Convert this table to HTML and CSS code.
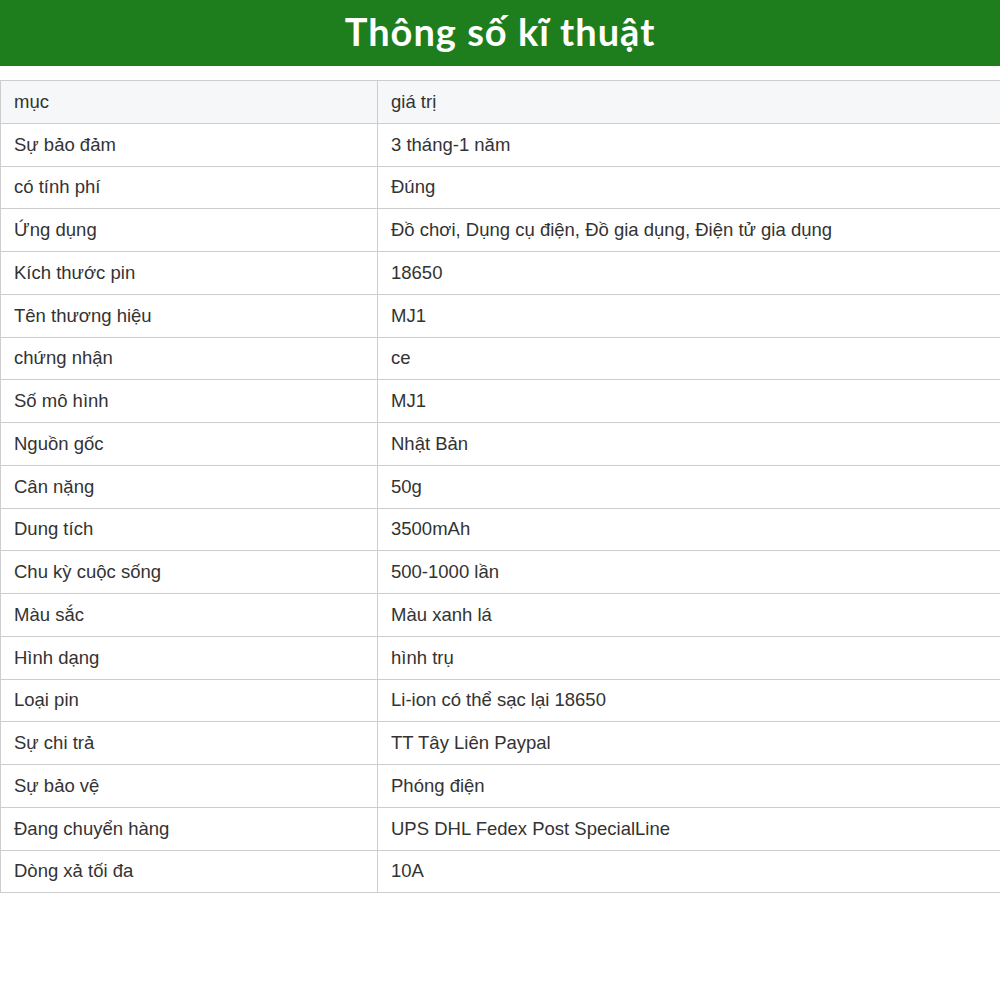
FILE: index.html
```html
<!DOCTYPE html>
<html lang="vi">
<head>
<meta charset="utf-8">
<title>Thông số kĩ thuật</title>
<link rel="stylesheet" href="styles.css">
</head>
<body>
<header class="banner"><h1 class="banner-title">Thông số kĩ thuật</h1></header>
<main class="content">
<table class="spec">
<colgroup><col class="col-key"><col class="col-val"></colgroup>
<thead>
<tr><th>mục</th><th>giá trị</th></tr>
</thead>
<tbody>
<tr><td>Sự bảo đảm</td><td>3 tháng-1 năm</td></tr>
<tr><td>có tính phí</td><td>Đúng</td></tr>
<tr><td>Ứng dụng</td><td>Đồ chơi, Dụng cụ điện, Đồ gia dụng, Điện tử gia dụng</td></tr>
<tr><td>Kích thước pin</td><td>18650</td></tr>
<tr><td>Tên thương hiệu</td><td>MJ1</td></tr>
<tr><td>chứng nhận</td><td>ce</td></tr>
<tr><td>Số mô hình</td><td>MJ1</td></tr>
<tr><td>Nguồn gốc</td><td>Nhật Bản</td></tr>
<tr><td>Cân nặng</td><td>50g</td></tr>
<tr><td>Dung tích</td><td>3500mAh</td></tr>
<tr><td>Chu kỳ cuộc sống</td><td>500-1000 lần</td></tr>
<tr><td>Màu sắc</td><td>Màu xanh lá</td></tr>
<tr><td>Hình dạng</td><td>hình trụ</td></tr>
<tr><td>Loại pin</td><td>Li-ion có thể sạc lại 18650</td></tr>
<tr><td>Sự chi trả</td><td>TT Tây Liên Paypal</td></tr>
<tr><td>Sự bảo vệ</td><td>Phóng điện</td></tr>
<tr><td>Đang chuyển hàng</td><td>UPS DHL Fedex Post SpecialLine</td></tr>
<tr><td>Dòng xả tối đa</td><td>10A</td></tr>
</tbody>
</table>
</main>
</body>
</html>
```
FILE: styles.css
```css
html, body {
  margin: 0;
  padding: 0;
  background: #ffffff;
  overflow: hidden;
}
.banner {
  height: 66px;
  background: #1e7d1d;
  display: flex;
  align-items: center;
  justify-content: center;
}
.banner-title {
  margin: 0;
  color: #ffffff;
  font-family: Lato, "Open Sans", sans-serif;
  font-weight: 700;
  font-size: 38px;
  letter-spacing: 1px;
  line-height: 1;
  padding-bottom: 4px;
}
.content {
  padding-top: 14px;
}
.spec {
  border-collapse: collapse;
  width: 1010px;
  font-family: "Liberation Sans", Arial, sans-serif;
  font-size: 18.5px;
  color: #333333;
}
.col-key { width: 377px; }
.spec th, .spec td {
  border: 1px solid #cdcdcd;
  height: 42.75px;
  padding: 0 13px;
  text-align: left;
  font-weight: 400;
  vertical-align: middle;
  box-sizing: border-box;
}
.spec thead th {
  background: #f5f7f9;
}
```
